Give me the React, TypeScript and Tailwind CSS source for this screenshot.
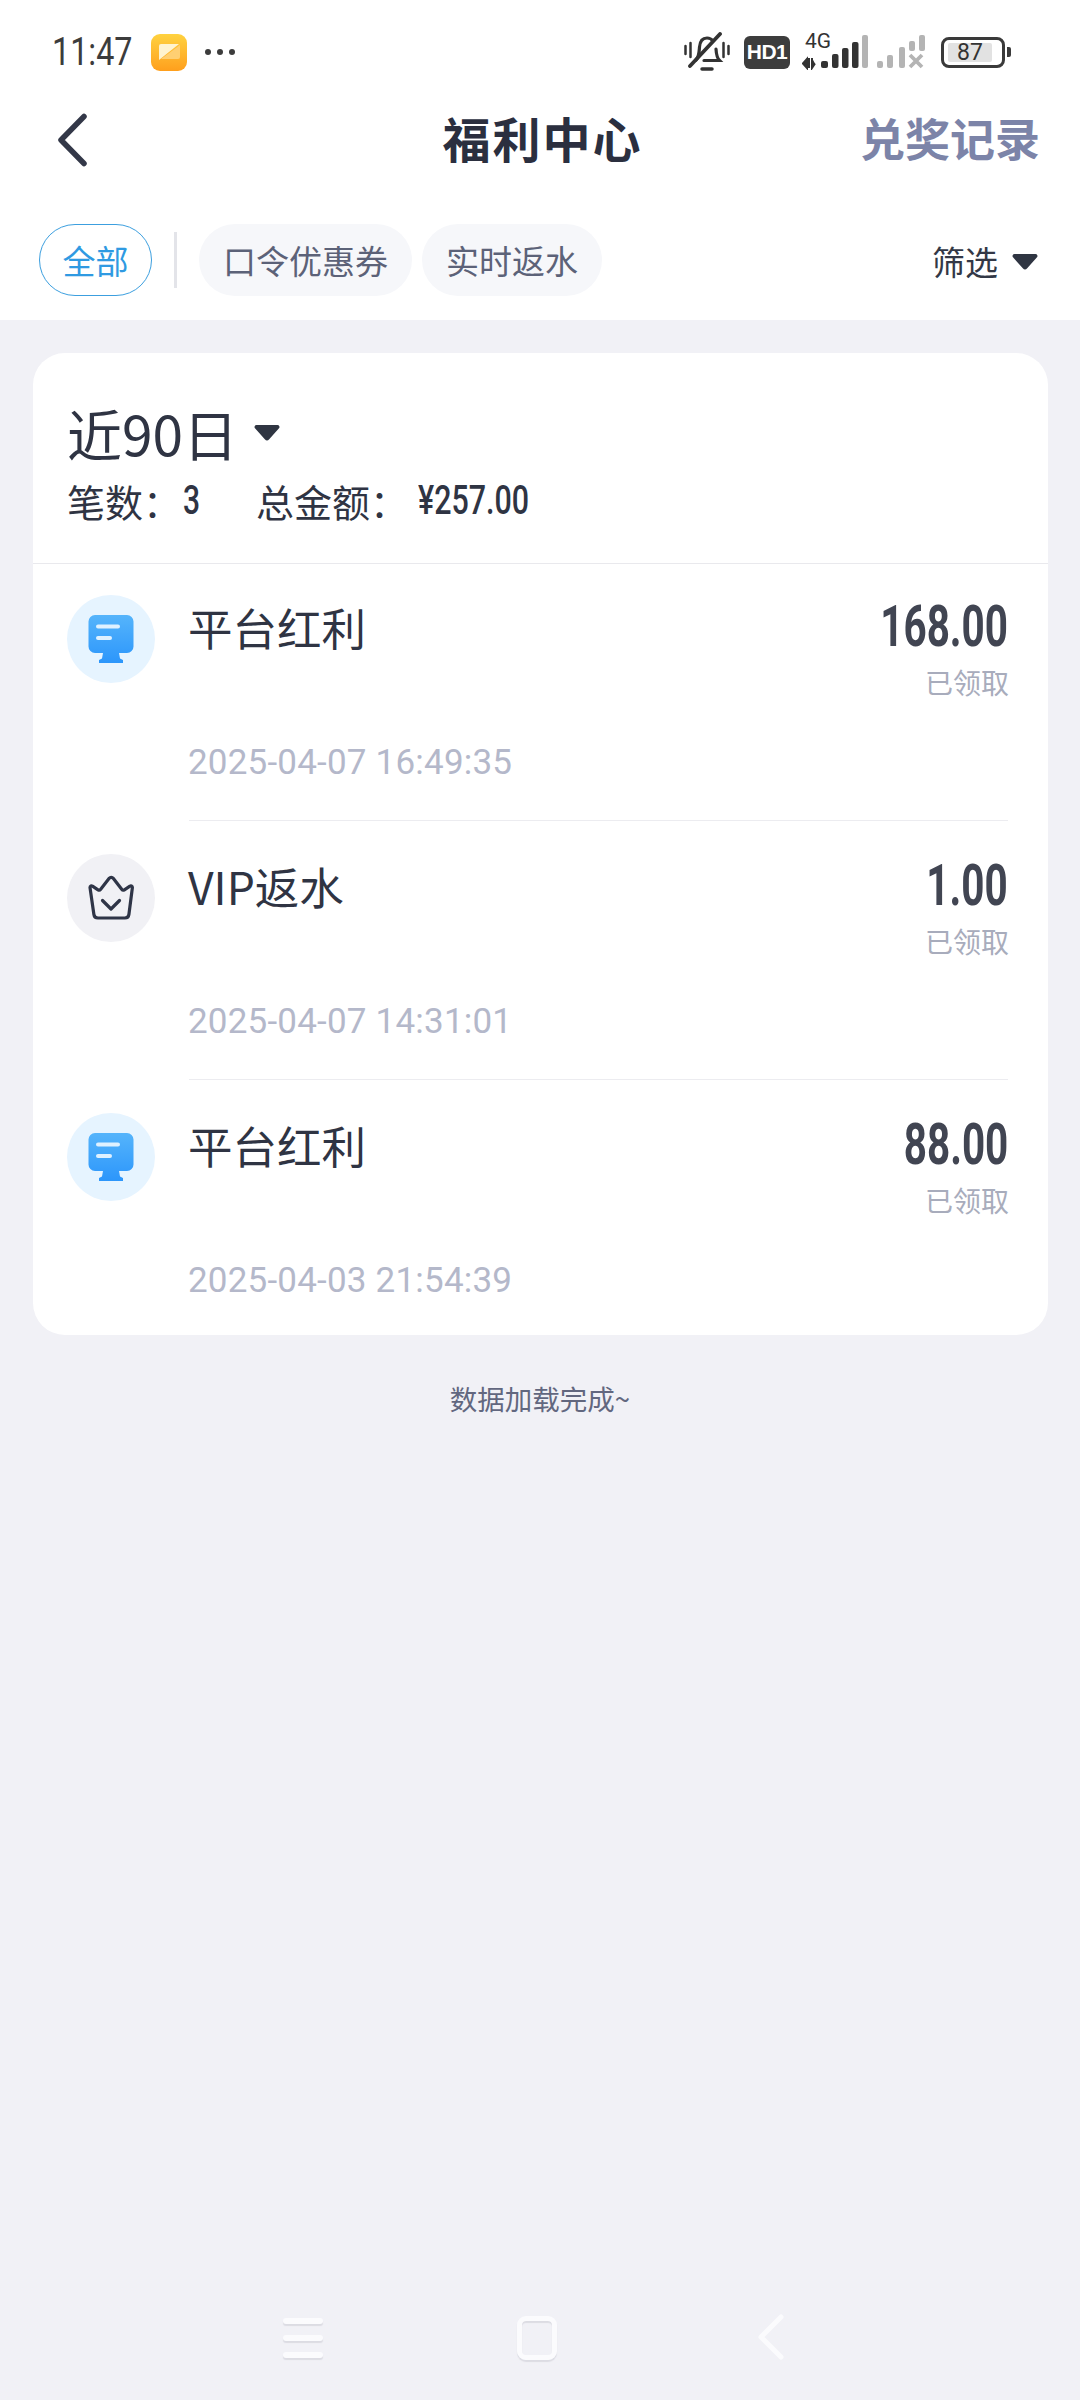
import React from "react";

const sans = "font-['Noto_Sans_CJK_SC','Noto_Sans',sans-serif]";
const din = "font-['Roboto',sans-serif]";

/**
 * Small filled caret used by the filters
 */
const Caret: React.FC = () => (
    <svg width="26" height="17" viewBox="0 0 26 17" className="block">
        <path d="M2.5 1h21a2 2 0 0 1 1.500 3.300l-9.800 11a3 3 0 0 1-4.400 0l-9.800-11a2 2 0 0 1 1.500-3.300z" fill="#2f3542" />
    </svg>
);

const MonitorIcon: React.FC = () => (
    <svg width="46" height="48" viewBox="0 0 46 48">
        <defs>
            <linearGradient id="monitor" x1="0" y1="0" x2="0" y2="1">
                <stop offset="0" stopColor="#55b4fb" />
                <stop offset="1" stopColor="#2c96fb" />
            </linearGradient>
        </defs>
        <path d="M7 0h32a6.500 6.500 0 0 1 6.500 6.500v25a6.500 6.500 0 0 1-6.500 6.500h-8l1 5.500 3 1.500v3h-24v-3l3-1.500 1-5.500h-8a6.500 6.500 0 0 1-6.500-6.500v-25a6.500 6.500 0 0 1 6.500-6.500z" fill="url(#monitor)" />
        <rect x="8" y="9.500" width="24" height="4" rx="2" fill="#dff1ff" />
        <rect x="8" y="21" width="16" height="4" rx="2" fill="#dff1ff" />
    </svg>
);

const CrownIcon: React.FC = () => (
    <svg width="48" height="46" viewBox="0 0 48 46" fill="none" stroke="#2f3547" strokeWidth="3.200" strokeLinecap="round" strokeLinejoin="round">
        <path d="M3 12.500c0-1.500 1.500-2 2.500-1.300l5.500 3.600c1 .6 2 .4 2.700-.5l8.500-11c1.100-1.300 3-1.300 4 0l8.500 11c.7.9 1.700 1.100 2.700.5l5.500-3.600c1-.7 2.500-.2 2.500 1.300l-3.500 27c-.3 2.300-1.700 3.500-4 3.500h-27c-2.300 0-3.700-1.200-4-3.500z" />
        <path d="M15.500 25.500l8.500 8.500 8.500-8.500" />
    </svg>
);

const StatusIcons: React.FC = () => (
    <div className="flex items-center">
        {/* Muted bell */}
        <svg width="46" height="40" viewBox="0 0 46 40" fill="none" stroke="#333" strokeLinecap="round" className="block">
            <path d="M1.500 14v8M6.500 11v14M39.500 11v14M44.500 14v8" strokeWidth="2.500" />
            <path d="M12 28c3-3 3-6 3.500-13 .5-6 3.500-9 7.500-9 2.500 0 4.500 1 6 3M32 17c.3 5 1 9 3.500 11.500H20" strokeWidth="3.200" />
            <path d="M18 37h10" strokeWidth="3.500" />
            <path d="M6 34L36 2" strokeWidth="3.800" />
        </svg>
        {/* SIM badge */}
        <div className="ml-[14px] w-[46px] h-[33px] rounded-[6px] bg-[#3d3d3d] text-white text-[21px] font-bold flex items-center justify-center font-['Liberation_Sans',sans-serif] tracking-[-0.5px]">HD1</div>
        {/* SIM 1 signal */}
        <div className="ml-[12px] relative w-[66px] h-[36px]">
            <span className="absolute left-[3px] top-[-5px] text-[21px] leading-[24px] text-[#333] font-['Roboto',sans-serif]">4G</span>
            <svg width="66" height="36" viewBox="0 0 66 36" className="block">
                <path d="M5 34v-9l-4 4.500zM7 24v10M10 24v10l3-4.500" stroke="#333" strokeWidth="2" fill="#333" />
                <rect x="19" y="27" width="7" height="7" rx="2" fill="#333" />
                <rect x="30" y="20" width="6.500" height="14" rx="2" fill="#333" />
                <rect x="40" y="14" width="6.500" height="20" rx="2" fill="#333" />
                <rect x="50" y="8" width="6.500" height="26" rx="2" fill="#333" />
                <rect x="60" y="1" width="6" height="33" rx="2" fill="#b4b4b4" />
            </svg>
        </div>
        {/* SIM 2 signal */}
        <svg width="48" height="36" viewBox="0 0 48 36" className="block ml-[9px]">
            <rect x="0" y="27" width="6" height="7" rx="2" fill="#b4b4b4" />
            <rect x="10" y="21" width="6" height="13" rx="2" fill="#b4b4b4" />
            <rect x="22" y="13" width="6" height="21" rx="2" fill="#b4b4b4" />
            <rect x="32" y="7" width="6" height="10" rx="2" fill="#b4b4b4" />
            <rect x="42" y="1" width="6" height="16" rx="2" fill="#b4b4b4" />
            <path d="M33 21l12 12M45 21L33 33" stroke="#b4b4b4" strokeWidth="3.800" />
        </svg>
        {/* Battery */}
        <div className="ml-[16px] flex items-center">
            <div className="w-[64px] h-[31px] rounded-[8px] border-[3px] border-[#3a3a3a] flex items-center pl-[4px]">
                <div className="w-[44px] h-[19px] bg-[#e2e2e2] rounded-[2px] flex items-center justify-center text-[23px] leading-none text-[#333] font-['Roboto',sans-serif]">87</div>
            </div>
            <div className="ml-[2px] w-[4px] h-[10px] rounded-r-[2px] bg-[#3a3a3a]" />
        </div>
    </div>
);

const Pill: React.FC<{label: string, active?: boolean}> = ({label, active}) => (
    <div className={`h-[72px] pt-[2px] rounded-full flex items-center justify-center text-[33px] ${active ? "w-[113px] border border-[#3c9fdf] text-[#2f9ae2]" : "bg-[#f6f7fa] text-[#5c6278] px-[24px]"}`}>
        {label}
    </div>
);

const rows = [
    {title: "平台红利", amount: "168.00", date: "2025-04-07 16:49:35", vip: false},
    {title: "VIP返水", amount: "1.00", date: "2025-04-07 14:31:01", vip: true},
    {title: "平台红利", amount: "88.00", date: "2025-04-03 21:54:39", vip: false},
];

/**
 * A single reward row
 */
const RewardRow: React.FC<{row: typeof rows[number], index: number}> = ({row, index}) => (
    <div className={`relative pl-[34px] pr-[40px] flex ${index === 0 ? "h-[256px] pt-[30px]" : index === 1 ? "h-[259px] pt-[33px]" : "h-[256px] pt-[33px]"}`}>
        {index > 0 && <div className="absolute left-[156px] right-[40px] top-0 h-[1px] bg-[#ececf0]" />}
        <div className={`mt-[1px] w-[88px] h-[88px] rounded-full flex items-center justify-center shrink-0 ${row.vip ? "bg-[#f1f1f5]" : "bg-[#e6f4ff]"}`}>
            {row.vip ? <CrownIcon /> : <MonitorIcon />}
        </div>
        <div className="ml-[33px] flex-1 flex flex-col">
            <div className="flex justify-between">
                <div className="mt-[3px] text-[44.5px] leading-[60px] text-[#2f3443]">{row.title}</div>
                <div className="flex flex-col items-end">
                    <div className={`mt-[5px] text-[57px] leading-[56px] font-bold text-[#414552] origin-right scale-x-[0.71] ${din}`}>{row.amount}</div>
                    <div className="mt-[9px] -mr-[1px] text-[28px] leading-[36px] text-[#a8acbc]">已领取</div>
                </div>
            </div>
            <div className="mt-[43px] text-[35px] tracking-[0.2px] leading-[40px] text-[#b4b8ca] font-['Roboto',sans-serif]">{row.date}</div>
        </div>
    </div>
);

const App: React.FC = () => {
    return (
        <div className={`w-[1080px] min-h-[2400px] flex flex-col bg-[#f1f1f6] ${sans}`}>
            {/* Status bar, nav and filters */}
            <div className="bg-white h-[320px] flex flex-col">
                <div className="h-[104px] pl-[52px] pr-[69px] flex items-center justify-between">
                    <div className="flex items-center">
                        <div className="w-[80px] whitespace-nowrap text-[38px] leading-none text-[#3c3c3c] font-['Roboto',sans-serif] origin-left scale-x-[0.85]">11:47</div>
                        <div className="ml-[19px] w-[36px] h-[37px] rounded-[9px] bg-gradient-to-b from-[#ffd23f] to-[#ff9f1c] flex items-center justify-center">
                            <svg width="24" height="24" viewBox="0 0 24 24"><path d="M2 20V6a2 2 0 0 1 2-2h18z" fill="#fff3cf" /><path d="M23 5v12a2 2 0 0 1-2 2H4z" fill="#ffcf72" /></svg>
                        </div>
                        <div className="ml-[18px] flex gap-[6px]">
                            <div className="w-[6px] h-[6px] rounded-full bg-[#3c3c3c]" />
                            <div className="w-[6px] h-[6px] rounded-full bg-[#3c3c3c]" />
                            <div className="w-[6px] h-[6px] rounded-full bg-[#3c3c3c]" />
                        </div>
                    </div>
                    <StatusIcons />
                </div>

                <div className="h-[72px] -mt-[3px] px-[40px] flex items-center">
                    <div className="flex-1 pl-[17px]">
                        <svg width="32" height="54" viewBox="0 0 32 54" fill="none" stroke="#333848" strokeWidth="5.500" strokeLinecap="round" strokeLinejoin="round" className="block mt-[5px]">
                            <path d="M27 3.500L4 27l23 23.500" />
                        </svg>
                    </div>
                    <div className="mr-[12px] text-[48px] font-bold text-[#2b2f3f] tracking-[2px] leading-none">福利中心</div>
                    <div className="flex-1 text-right text-[45px] font-bold text-[#7c84a8] leading-none">兑奖记录</div>
                </div>

                <div className="mt-[51px] pl-[39px] pr-[42px] flex items-center">
                    <Pill label="全部" active />
                    <div className="ml-[22px] mr-[22px] w-[3px] h-[56px] bg-[#e3e4e9]" />
                    <Pill label="口令优惠券" />
                    <div className="ml-[10px]"><Pill label="实时返水" /></div>
                    <div className="ml-auto pt-[3px] flex items-center gap-[14px] text-[33px] text-[#333846]">
                        筛选
                        <Caret />
                    </div>
                </div>
            </div>

            {/* Reward card */}
            <div className="mt-[33px] mx-[33px] w-[1015px] bg-white rounded-[32px]">
                <div className="h-[211px] border-b border-[#e9e9ed] pl-[34px] pt-[45px]">
                    <div className="flex items-center">
                        <span className="text-[55px] leading-[68px] text-[#2f3443]">近90日</span>
                        <div className="ml-[16px]"><Caret /></div>
                    </div>
                    <div className="mt-[10px] flex items-center text-[38px] leading-[50px] text-[#2f3443]">
                        <span>笔数：</span>
                        <span className={`ml-[2px] w-[16px] text-[40px] font-medium origin-left scale-x-[0.75] ${din}`}>3</span>
                        <span className="ml-[57px]">总金额：</span>
                        <span className={`ml-[10px] text-[40px] font-medium origin-left scale-x-[0.76] ${din}`}>¥257.00</span>
                    </div>
                </div>
                {rows.map((row, i) => <RewardRow key={i} row={row} index={i} />)}
            </div>

            <div className="mt-[45px] text-center text-[27.5px] leading-[36px] text-[#62677f]">数据加载完成~</div>

            {/* Navigation bar */}
            <div className="mt-auto mb-[37px] h-[50px] pr-[14px] flex items-center justify-center">
                <div className="w-[40px] flex flex-col gap-[11px] mr-[194px]">
                    <div className="h-[6px] rounded-full bg-[#fbfbfd] shadow-[0_2px_1px_#dcdce3]" />
                    <div className="h-[6px] rounded-full bg-[#fbfbfd] shadow-[0_2px_1px_#dcdce3]" />
                    <div className="h-[6px] rounded-full bg-[#fbfbfd] shadow-[0_2px_1px_#dcdce3]" />
                </div>
                <div className="w-[40px] h-[44px] rounded-[9px] border-[5px] border-[#fbfbfd] shadow-[0_2px_1px_#dcdce3,inset_0_2px_1px_#dcdce3]" />
                <svg width="27" height="50" viewBox="0 0 27 50" fill="none" stroke="#fbfbfd" strokeWidth="5" strokeLinecap="round" strokeLinejoin="round" className="ml-[200px] block">
                    <path d="M24 4L4 24l20 20" />
                </svg>
            </div>
        </div>
    );
};

export default App;
